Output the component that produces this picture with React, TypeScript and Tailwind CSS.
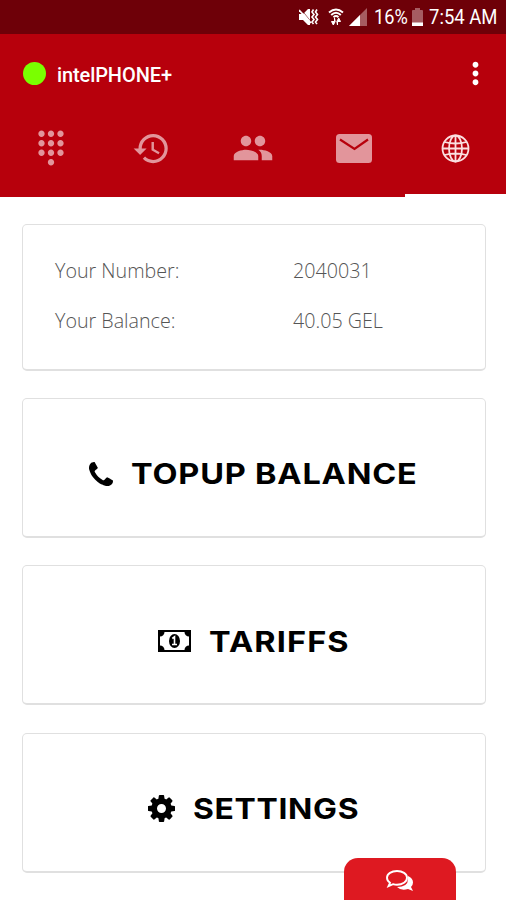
import React from 'react'
import { MdDialpad, MdHistory, MdMoreVert, MdPeople } from 'react-icons/md'

type CardProps = {
  label: string;
  className: string;
  labelClassName: string;
  icon: React.ReactNode;
};

const StatusBar = () => {
  return (
    <div className="flex h-[34px] w-full items-center justify-end bg-[#6e0008] pr-[9px] text-white">
      <svg className="h-[18px] w-[20px]" viewBox="0 0 20 18" fill="currentColor">
        <path d="M0 6h4l5-5h2v16H9l-5-5H0z" />
        <path d="M2 1l11 14" stroke="#6e0008" strokeWidth=".6" />
        <path d="M0 2l12 13" stroke="currentColor" strokeWidth="1.8" />
        <path d="M14.500 1.500l-1.500 2.500 2 2.500-2 2.500 2 2.500-2 2.500 1.500 2M18 1.500l-1.500 2.500 2 2.500-2 2.500 2 2.500-2 2.500 1.500 2" fill="none" stroke="currentColor" strokeWidth="1.6" />
      </svg>
      <svg className="ml-[9px] h-[18px] w-4" viewBox="0 0 16 18" fill="none" stroke="currentColor">
        <path d="M1 4.500Q8-1.500 15 4.500M3.200 7Q8 2.500 12.800 7M5.500 9.200Q8 7 10.500 9.200" strokeWidth="1.9" />
        <path d="M6.500 10v3.500H3.500L5.300 17 7.200 13.500zM9.500 17v-3.500h3L10.700 10 8.800 13.500z" fill="currentColor" strokeWidth="1" />
      </svg>
      <svg className="ml-[5px] h-[18px] w-[18px]" viewBox="0 0 18 18">
        <path d="M18 0v18H0z" fill="#a65c61" />
        <path d="M11 7v11H0z" fill="white" />
      </svg>
      <span className="ml-[7px] w-[33px] origin-left scale-x-[0.91] whitespace-nowrap text-[20px] leading-none">16%</span>
      <svg className="ml-[5px] h-[18px] w-[11px]" viewBox="0 0 11 18">
        <path d="M3 0h5v2h2q1 0 1 1v15H0V3q0-1 1-1h2z" fill="#a65c61" />
        <path d="M0 14.500h11V18H0z" fill="white" />
      </svg>
      <span className="ml-[6px] w-[68px] origin-left scale-x-[0.925] whitespace-nowrap text-[20px] leading-none">7:54 AM</span>
    </div>
  )
}

const MailIcon = () => {
  return (
    <svg className="h-[29px] w-[36px]" viewBox="0 0 36 29" fill="none">
      <rect width="36" height="29" rx="3.500" fill="currentColor" />
      <path d="M4 5.500l14.500 9.500L32 5.500" stroke="#b7000c" strokeWidth="2.200" />
    </svg>
  )
}

const GlobeIcon = () => {
  return (
    <svg className="h-[29px] w-[29px]" viewBox="0 0 29 29" fill="none" stroke="#fbdfe0" strokeWidth="1.8">
      <circle cx="14.500" cy="14.500" r="13" />
      <ellipse cx="14.500" cy="14.500" rx="6.500" ry="13" />
      <path d="M14.500 1.500v26M1.500 14.500h26M3.500 8q11 3 22 0M3.500 21q11-3 22 0" />
    </svg>
  )
}

const PhoneIcon = () => (
  <svg className="h-6 w-6" viewBox="0 128 1408 1408" fill="currentColor">
    <path d="M1408 1240q0 27-10 70.5t-21 68.5q-21 50-122 106-94 51-186 51-27 0-52.5-3.5t-57.5-12.5-47.5-14.5-55.5-20.5-49-18q-98-35-175-83-128-79-264.5-215.5t-215.5-264.5q-48-77-83-175-3-9-18-49t-20.5-55.5-14.5-47.5-12.5-57.5-3.5-52.5q0-92 51-186 56-101 106-122 25-11 68.5-21t70.5-10q14 0 21 3 18 6 53 76 11 19 30 54t35 63.5 31 53.5q3 4 17.5 25t21.5 35.5 7 28.5q0 20-28.5 50t-62 55-62 53-28.5 46q0 9 5 22.5t8.5 20.5 14 24 11.5 19q76 137 174 235t235 174q2 1 19 11.5t24 14 20.5 8.5 22.5 5q18 0 46-28.5t53-62 55-62 50-28.5q14 0 28.5 7t35.5 21.5 25 17.5q25 15 53.5 31t63.5 35 54 30q70 35 76 53 3 7 3 21z" />
  </svg>
)

const MoneyIcon = () => (
  <svg className="h-[22px] w-[33px]" viewBox="0 0 33 22">
    <path fillRule="evenodd" d="M0 0h33v22H0zM6.500 2A4.500 4.500 0 0 1 2 6.500v9A4.500 4.500 0 0 1 6.500 20h20a4.500 4.500 0 0 1 4.500-4.500v-9A4.500 4.500 0 0 1 26.500 2z" />
    <ellipse cx="16.500" cy="11" rx="5.500" ry="7" />
    <path d="M14.300 8.500l2.200-1.700v7M14 14.500h5" fill="none" stroke="white" strokeWidth="1.6" />
  </svg>
)

const GearIcon = () => (
  <svg className="h-[27px] w-[27px]" viewBox="0 128 1536 1536" fill="currentColor">
    <path d="M1024 896q0-106-75-181t-181-75-181 75-75 181 75 181 181 75 181-75 75-181zm512-109v222q0 12-8 23t-20 13l-185 28q-19 54-39 91 35 50 107 138 10 12 10 25t-9 23q-27 37-99 108t-94 71q-12 0-26-9l-138-108q-44 23-91 38-16 136-29 186-7 28-36 28h-222q-14 0-24.5-8.5t-11.5-21.5l-28-184q-49-16-90-37l-141 107q-10 9-25 9-14 0-25-11-126-114-165-168-7-10-7-23 0-12 8-23 15-21 51-66.5t54-70.5q-27-50-41-99l-183-27q-13-2-21-12.5t-8-23.5v-222q0-12 8-23t19-13l186-28q14-46 39-92-40-57-107-138-10-12-10-24 0-10 9-23 26-36 98.5-107.5t94.5-71.5q13 0 26 10l138 107q44-23 91-38 16-136 29-186 7-28 36-28h222q14 0 24.500 8.500t11.500 21.500l28 184q49 16 90 37l142-107q9-9 24-9 13 0 25 10 129 119 165 170 7 8 7 22 0 12-8 23-15 21-51 66.500t-54 70.500q26 50 41 98l183 28q13 2 21 12.500t8 23.500z" />
  </svg>
)

const ActionCard = ({ label, className, labelClassName, icon }: CardProps) => {
  return (
    <button className={`flex h-[140px] w-full items-center gap-[18px] rounded-[5px] border border-b-2 border-[#e0e0e0] bg-white pt-[13px] text-black ${className}`}>
      {icon}
      <span className={`origin-left whitespace-nowrap font-['Inter',sans-serif] text-[29px] font-bold leading-none ${labelClassName}`}>
        {label}
      </span>
    </button>
  )
}

const Header = () => {
  return (
    <header className="h-[163px] w-full bg-[#b7000c]">
      <div className="flex h-[78px] items-center pl-[23px] pr-[13px] text-white">
        <span className="h-[23px] w-[23px] rounded-full bg-[#7aff00]" />
        <span className="ml-[11px] flex-1 pt-[3px] text-[20px] font-medium tracking-[-0.1px]">intelPHONE+</span>
        <button><MdMoreVert className="h-[35px] w-[35px]" /></button>
      </div>
      <nav className="grid h-[85px] grid-cols-5 text-[#e2959b]">
        <div className="flex h-[72px] items-center justify-center"><MdDialpad className="h-[38px] w-[38px]" /></div>
        <div className="flex h-[72px] items-center justify-center"><MdHistory className="h-[39px] w-[39px]" /></div>
        <div className="flex h-[72px] items-center justify-center"><MdPeople className="h-[42px] w-[42px]" /></div>
        <div className="flex h-[72px] items-center justify-center"><MailIcon /></div>
        <div className="flex h-full justify-center border-b-[3px] border-white pt-[22px]"><GlobeIcon /></div>
      </nav>
    </header>
  )
}

const App = () => {
  return (
    <div className="relative h-[900px] w-[506px] overflow-hidden bg-white font-['Roboto',sans-serif]">
      <StatusBar />
      <Header />
      <main className="flex flex-col gap-[27.5px] pl-[22px] pr-[20px] pt-[27px]">
        <section className="-mb-[0.6px] grid h-[147px] grid-cols-[238px_1fr] content-start gap-y-[22px] rounded-[5px] border border-b-2 border-[#e0e0e0] pl-8 pt-[32px] font-['Open_Sans',sans-serif] text-[19.7px] font-light leading-7 text-[#555]">
          <span>Your Number:</span>
          <span>2040031</span>
          <span>Your Balance:</span>
          <span>40.05 GEL</span>
        </section>
        <ActionCard label="TOPUP BALANCE" className="pl-[66px]" labelClassName="scale-x-[1.12] tracking-[0.72px]" icon={<PhoneIcon />} />
        <ActionCard label="TARIFFS" className="pl-[135px]" labelClassName="scale-x-[1.12] tracking-[1px]" icon={<MoneyIcon />} />
        <ActionCard label="SETTINGS" className="pl-[125px]" labelClassName="scale-x-[1.1] tracking-[0.6px]" icon={<GearIcon />} />
      </main>
      <button className="absolute bottom-0 left-[344px] flex h-[42px] w-[112px] justify-center rounded-t-[14px] bg-[#de1921] pt-[12px]">
        <svg className="h-[22px] w-[28px]" viewBox="0 0 28 22">
          <path d="M22 6q5 2 5 6.500 0 2.500-2 4.500l2 4-5-2q-7 2-11-2 11 0 11-8z" fill="white" />
          <path d="M11 1C5.500 1 1 3.800 1 7.800c0 2 1 3.700 3 5l-1.500 3.400L7 14.200q2 .6 4 .6c5.500 0 10-3 10-7S16.500 1 11 1z" fill="#de1921" stroke="white" strokeWidth="1.900" />
        </svg>
      </button>
    </div>
  )
}

export default App
